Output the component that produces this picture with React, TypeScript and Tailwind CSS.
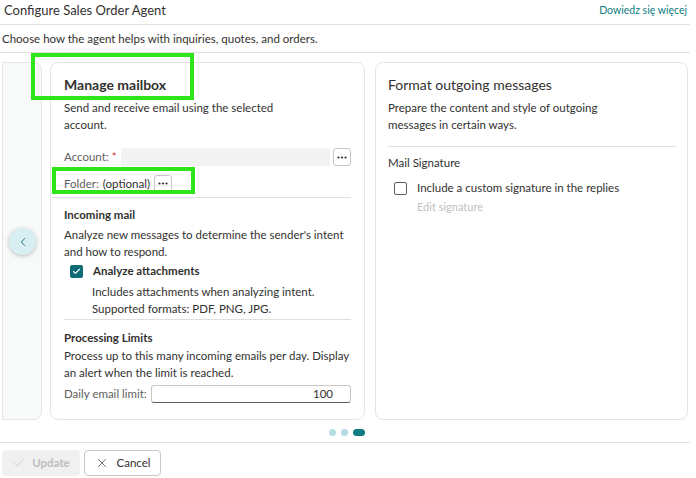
import { Check, ChevronLeft, X } from "lucide-react";

const font = { fontFamily: 'Lato, "Noto Sans", sans-serif' };

function Dots() {
  return (
    <button className="w-[18px] h-[18px] flex items-center justify-center border border-[#c8c6c4] rounded-[3px] bg-white text-[#323130]">
      <svg width="10" height="3" viewBox="0 0 10 3">
        <circle cx="1.5" cy="1.5" r="1.1" fill="#323130" />
        <circle cx="5" cy="1.5" r="1.1" fill="#323130" />
        <circle cx="8.5" cy="1.5" r="1.1" fill="#323130" />
      </svg>
    </button>
  );
}

function CheckBox({ checked }: { checked?: boolean }) {
  return checked ? (
    <span className="w-[13px] h-[13px] rounded-[2px] bg-[#0f6c74] flex items-center justify-center">
      <Check size={9} strokeWidth={3} className="text-white" />
    </span>
  ) : (
    <span className="w-[13px] h-[13px] rounded-[2px] border border-[#605e5c] bg-white" />
  );
}

export default function App() {
  return (
    <div className="relative w-[696px] h-[478px] bg-white text-[#323130] text-[11.5px] overflow-hidden whitespace-nowrap" style={font}>
      {/* header */}
      <div className="w-[690px] h-[25px] border-b border-[#e1dfdd] flex items-start justify-between">
        <h1 className="pl-[4px] pt-[1px] text-[13px] leading-[18px]">Configure Sales Order Agent</h1>
        <a className="pr-[3px] pt-[3px] text-[10.5px] text-[#0f7b83]">Dowiedz się więcej</a>
      </div>
      <div className="w-[690px] h-[28px] border-b border-[#e1dfdd] flex items-center pl-[2px]">
        Choose how the agent helps with inquiries, quotes, and orders.
      </div>

      {/* carousel */}
      <div className="relative flex pt-[9px] pl-[2px] h-[368px]">
        <div className="w-[40px] h-[358px] bg-[#f8f9f9] border border-[#e5e5e5] rounded-r-[8px]" />
        <div className="ml-[8px] w-[315px] h-[358px] border border-[#e5e5e5] rounded-[8px] pl-[13px] pr-[13px] pt-[12px]">
          <h2 className="text-[14px] font-bold leading-[20px]">Manage mailbox</h2>
          <p className="mt-[4px] leading-[17px]">
            Send and receive email using the selected
            <br />
            account.
          </p>
          <div className="mt-[15px] flex items-center h-[18px]">
            <span className="text-[#605e5c] w-[57px]">
              Account: <span className="text-[#d13438]">*</span>
            </span>
            <div className="w-[210px] h-[18px] bg-[#f3f3f3]" />
            <div className="ml-[3px]">
              <Dots />
            </div>
          </div>
          <div className="mt-[8px] flex items-center h-[19px] gap-[4px]">
            <span className="text-[#605e5c]">Folder:</span>
            <span>(optional)</span>
            <Dots />
          </div>
          <div className="mt-[4px] -ml-[12px] border-t border-[#e1dfdd]" />
          <h3 className="mt-[9px] font-bold leading-[16px]">Incoming mail</h3>
          <p className="mt-[3px] leading-[17px]">
            Analyze new messages to determine the sender's intent
            <br />
            and how to respond.
          </p>
          <div className="mt-[3px] ml-[6px] flex items-center gap-[10px] h-[16px]">
            <CheckBox checked />
            <span className="font-bold">Analyze attachments</span>
          </div>
          <p className="mt-[4px] ml-[28px] leading-[17px]">
            Includes attachments when analyzing intent.
            <br />
            Supported formats: PDF, PNG, JPG.
          </p>
          <div className="mt-[2px] border-t border-[#e1dfdd]" />
          <h3 className="mt-[10px] font-bold leading-[16px]">Processing Limits</h3>
          <p className="mt-[1px] leading-[17px]">
            Process up to this many incoming emails per day. Display
            <br />
            an alert when the limit is reached.
          </p>
          <div className="mt-[4px] flex items-center h-[18px]">
            <span className="text-[#605e5c] w-[87px]">Daily email limit:</span>
            <div className="w-[200px] h-[18px] border border-[#c8c6c4] border-b-[#605e5c] rounded-[3px] text-right pr-[17px] leading-[16px]">
              100
            </div>
          </div>
        </div>
        <div className="ml-[10px] w-[313px] h-[358px] border border-[#e5e5e5] rounded-[8px] pl-[12px] pr-[11px] pt-[12px]">
          <h2 className="text-[14px] leading-[20px]">Format outgoing messages</h2>
          <p className="mt-[4px] leading-[17px]">
            Prepare the content and style of outgoing
            <br />
            messages in certain ways.
          </p>
          <div className="mt-[13px] border-t border-[#e1dfdd]" />
          <h3 className="mt-[8px] leading-[16px]">Mail Signature</h3>
          <div className="mt-[9px] ml-[6px] flex items-center gap-[10px] h-[16px]">
            <CheckBox />
            <span>Include a custom signature in the replies</span>
          </div>
          <p className="mt-[3px] ml-[29px] text-[11px] text-[#c0c0c0]">Edit signature</p>
        </div>

        <button className="absolute left-[9px] top-[175px] w-[27px] h-[27px] rounded-full bg-[#d7eff1] shadow-[0_1px_4px_rgba(0,0,0,0.25)] flex items-center justify-center text-[#0f6c74]">
          <ChevronLeft size={14} strokeWidth={1.6} />
        </button>
      </div>

      {/* pager */}
      <div className="w-[690px] h-[22px] border-b border-[#e1dfdd] flex items-start justify-center gap-[5px] pl-[4px] pt-[8px]">
        <span className="w-[7px] h-[7px] rounded-full bg-[#b5dce0]" />
        <span className="w-[7px] h-[7px] rounded-full bg-[#b5dce0]" />
        <span className="w-[12px] h-[7px] rounded-full bg-[#0f7b83]" />
      </div>

      {/* footer */}
      <div className="flex gap-[4px] pl-[2px] pt-[7px]">
        <button className="w-[78px] h-[26px] rounded-[4px] bg-[#f0f0f0] text-[#bdbdbd] flex items-center justify-center gap-[6px] font-bold">
          <Check size={14} strokeWidth={1.2} />
          Update
        </button>
        <button className="w-[77px] h-[26px] rounded-[4px] border border-[#c8c6c4] bg-white flex items-center justify-center gap-[8px]">
          <X size={14} strokeWidth={1.2} />
          Cancel
        </button>
      </div>

      {/* highlight annotations */}
      <div className="absolute left-[31px] top-[53px] w-[163px] h-[47px] border-[4px] border-[#2ee51a]" />
      <div className="absolute left-[52px] top-[167px] w-[143px] h-[27px] border-[4px] border-[#2ee51a]" />
    </div>
  );
}
